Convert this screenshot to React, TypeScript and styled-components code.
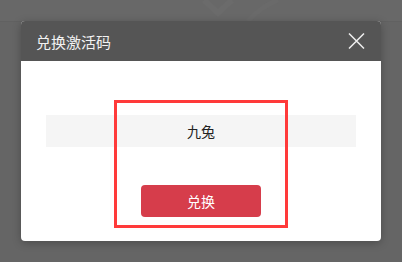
import styled, { createGlobalStyle } from 'styled-components';

const GlobalStyle = createGlobalStyle`
  html, body {
    margin: 0;
    padding: 0;
    width: 402px;
    height: 262px;
    overflow: hidden;
    font-family: "Microsoft YaHei", "Noto Sans CJK SC", "Noto Sans", sans-serif;
  }
`;

const Page = styled.div`
  position: relative;
  width: 402px;
  height: 262px;
  background: #656565;
`;

const PageTop = styled.div`
  height: 21px;
  background: #686868;
  border-bottom: 1px solid #616161;
  padding-left: 190px;
`;

const Backdrop = styled.div`
  position: absolute;
  inset: 0;
  display: flex;
  align-items: center;
  justify-content: center;
`;

const Dialog = styled.div`
  position: relative;
  width: 360px;
  border-radius: 4px;
  overflow: hidden;
  background: #fff;
  box-shadow: 0 2px 8px rgba(0, 0, 0, 0.25);
`;

const Header = styled.div`
  height: 40px;
  background: #555555;
  display: flex;
  align-items: center;
  justify-content: space-between;
  padding: 0 15px;
`;

const Title = styled.span`
  color: #f2f2f2;
  font-size: 15px;
  line-height: 1;
`;

const CloseButton = styled.button`
  width: 20px;
  height: 20px;
  padding: 0;
  border: 0;
  background: transparent;
  display: flex;
  align-items: center;
  justify-content: center;
  cursor: pointer;
`;

const Body = styled.div`
  height: 180px;
  box-sizing: border-box;
  padding: 54px 25px 24px;
  display: flex;
  flex-direction: column;
  align-items: center;
`;

const CodeField = styled.div`
  width: 100%;
  height: 32px;
  background: #f5f5f5;
  display: flex;
  align-items: center;
  justify-content: center;
  font-size: 14px;
  color: #222;
`;

const SubmitButton = styled.button`
  margin-top: 38px;
  width: 120px;
  height: 32px;
  border: 0;
  border-radius: 4px;
  background: #d63d4b;
  color: #fff;
  font-family: inherit;
  font-size: 14px;
  cursor: pointer;
`;

const Highlight = styled.div`
  position: absolute;
  left: 93px;
  top: 79px;
  width: 168px;
  height: 122px;
  border: 3px solid #ff3a3a;
  pointer-events: none;
`;

export default function App() {
  return (
    <>
      <GlobalStyle />
      <Page>
        <PageTop>
          <svg width="90" height="21" viewBox="0 0 90 21">
            <path d="M14 0 L28 13 L42 0" stroke="#6b6b6b" strokeWidth="6" fill="none" />
            <path d="M58 21 Q72 6 88 0" stroke="#6a6a6a" strokeWidth="5" fill="none" />
          </svg>
        </PageTop>
        <Backdrop>
          <Dialog>
            <Header>
              <Title>兑换激活码</Title>
              <CloseButton aria-label="关闭">
                <svg width="17" height="16" viewBox="0 0 17 16">
                  <path d="M1 0.5 L16 15.5 M16 0.5 L1 15.5" stroke="#eeeeee" strokeWidth="1.5" />
                </svg>
              </CloseButton>
            </Header>
            <Body>
              <CodeField>九兔</CodeField>
              <SubmitButton>兑换</SubmitButton>
            </Body>
            <Highlight />
          </Dialog>
        </Backdrop>
      </Page>
    </>
  );
}
